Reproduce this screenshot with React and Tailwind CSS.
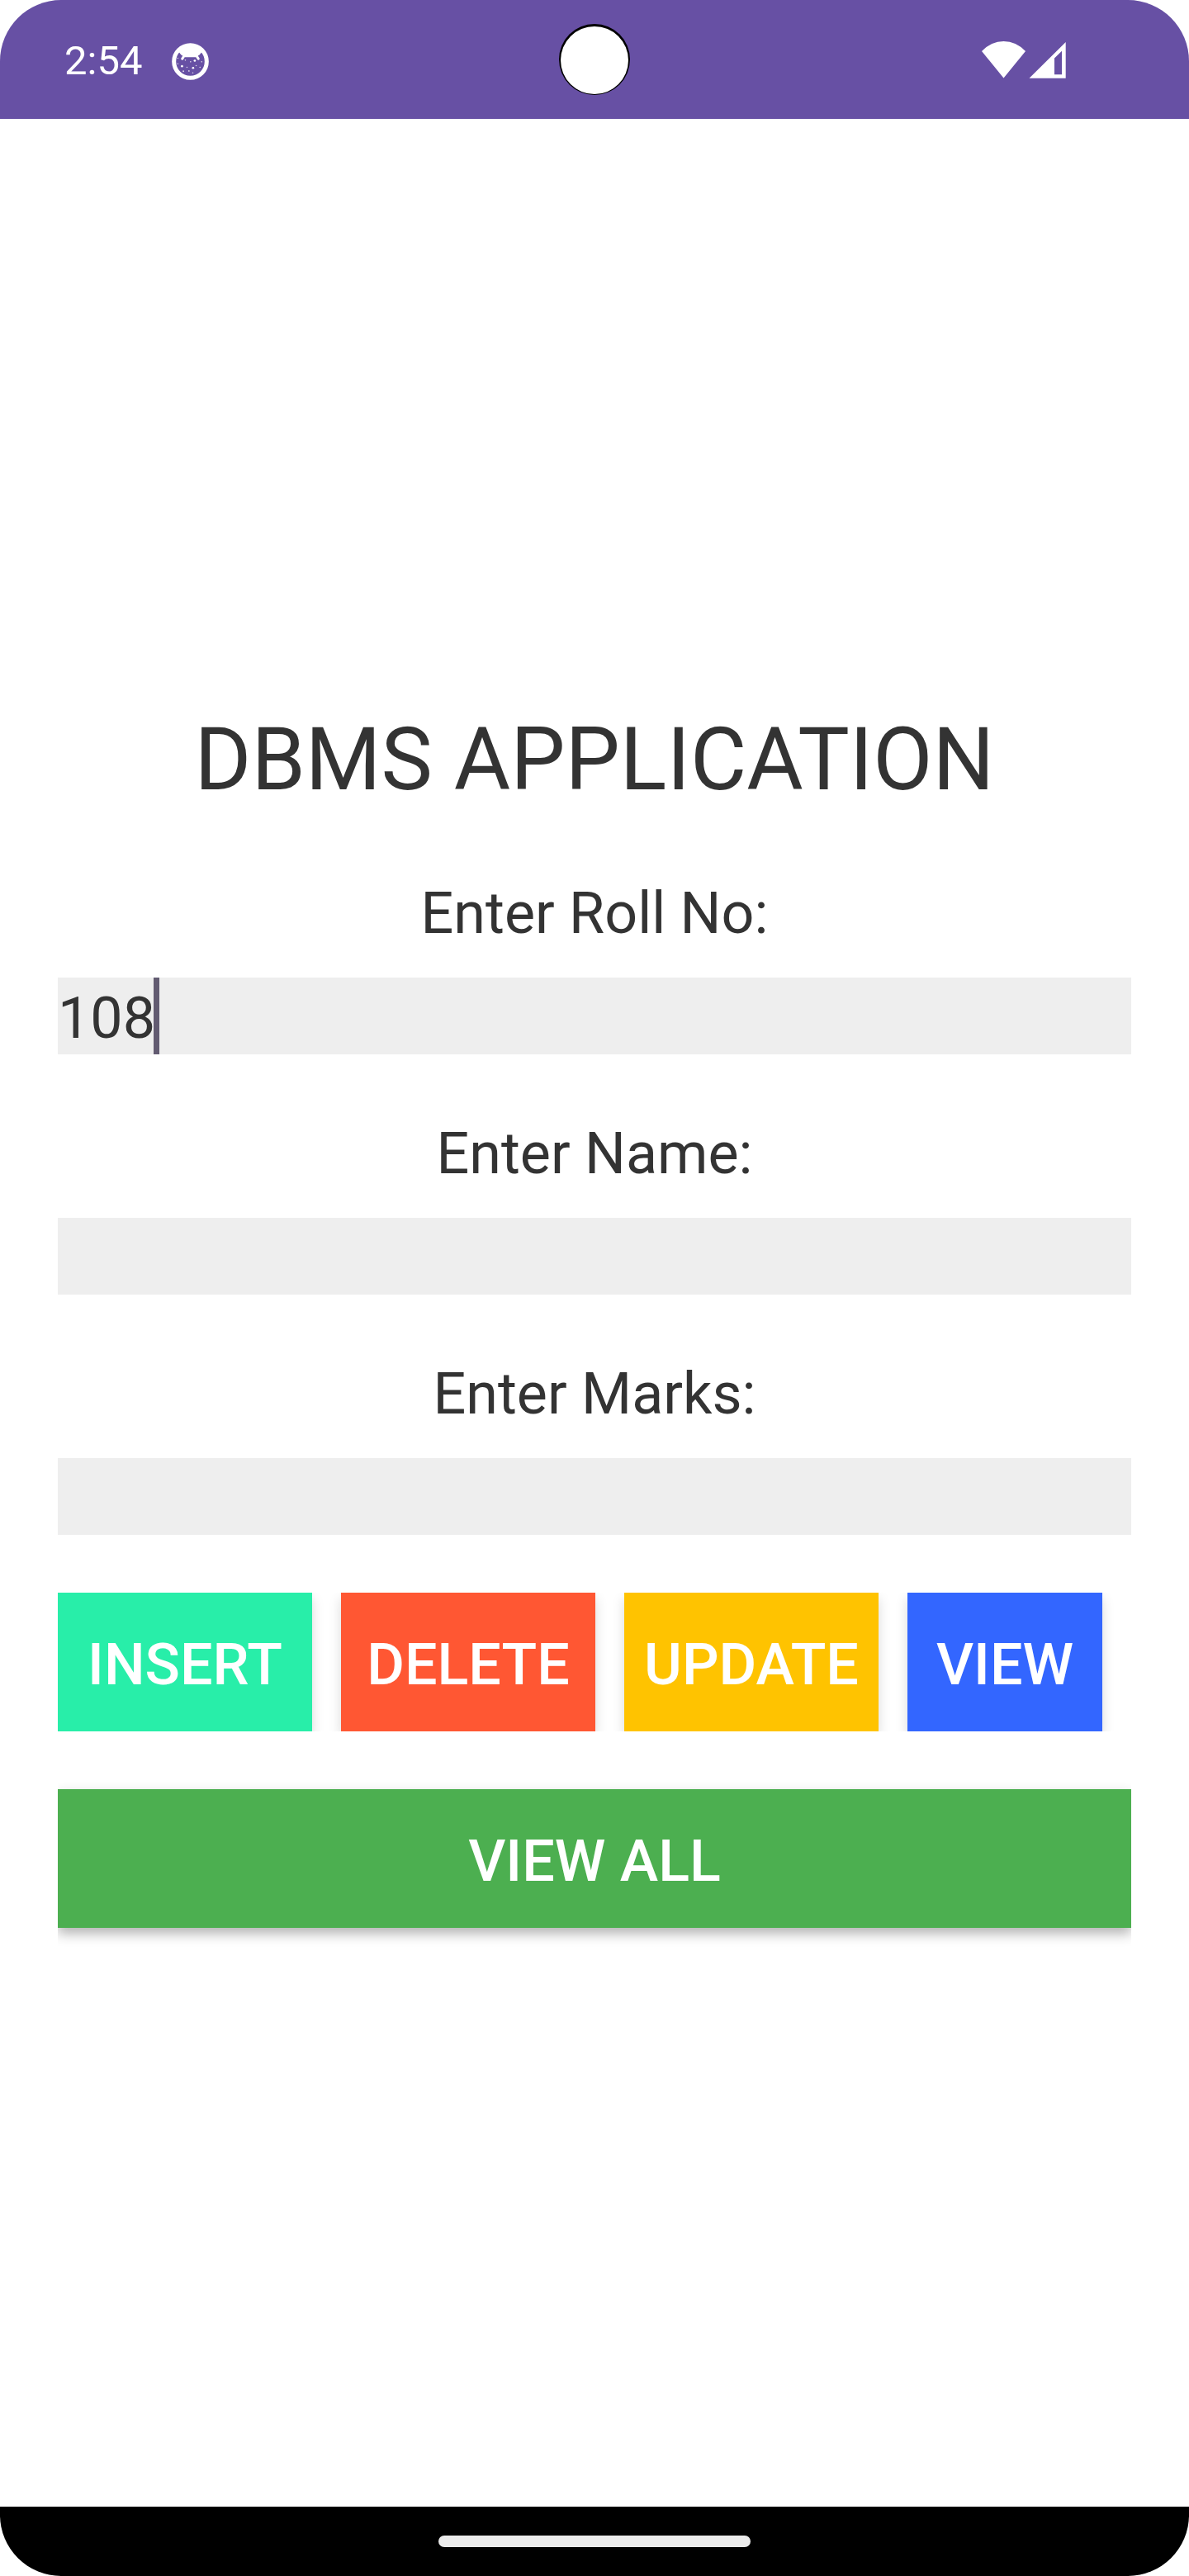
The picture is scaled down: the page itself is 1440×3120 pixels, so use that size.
import React, { useState } from "react";

function DebugIcon() {
  return (
    <svg viewBox="0 0 134 134" className="size-[45px]" fill="#fff" aria-hidden="true">
      <circle cx="67" cy="67" r="59" fill="none" stroke="#fff" strokeWidth="15" />
      <path d="M20 33 C34 8 100 8 114 33 L107 34 L100 43 C94 46 92 50 86 51 H48 C42 50 40 46 34 43 L27 34 Z" />
      <path d="M45 46 L38 57 M89 46 L96 57" stroke="#fff" strokeWidth="9" strokeLinecap="round" />
      <circle cx="83" cy="64" r="4" />
      <circle cx="37" cy="84" r="4" />
      <circle cx="77" cy="90" r="4" />
      <g opacity="0.75">
        <circle cx="22" cy="55" r="2.4" />
        <circle cx="49" cy="62" r="2.4" />
        <circle cx="68" cy="68" r="2.4" />
        <circle cx="108" cy="68" r="2.4" />
        <circle cx="22" cy="75" r="2.4" />
        <circle cx="55" cy="88" r="2.4" />
        <circle cx="88" cy="82" r="2.4" />
        <circle cx="102" cy="88" r="2.4" />
        <circle cx="42" cy="102" r="2.8" />
        <circle cx="62" cy="101" r="2.8" />
        <circle cx="76" cy="108" r="2.4" />
      </g>
    </svg>
  );
}

function WifiIcon() {
  return (
    <svg viewBox="0 0 53 45" className="h-[45px] w-[53px]" fill="#fff" aria-hidden="true">
      <path d="M26.500 44.500 L0 12 Q11.500 0 26.500 0 T53 12 Z" />
    </svg>
  );
}

function SignalIcon() {
  return (
    <svg viewBox="0 0 45 45" className="size-[45px]" fill="#fff" fillRule="evenodd" aria-hidden="true">
      <path d="M0.500 44.700 L44.700 1 V44.700 Z M31 20.500 V40.300 H40 V11.700 Z" />
    </svg>
  );
}

function StatusBar() {
  return (
    <header className="relative flex h-36 items-center justify-between bg-[#6750a4] pr-[149px] pl-[78px]">
      <div className="flex items-center gap-9 pt-1">
        <time className="text-[49px] leading-[58px] text-white">2:54</time>
        <DebugIcon />
      </div>
      <div className="absolute inset-0 m-auto size-[86px] rounded-full bg-black px-[2px] pt-[3px]">
        <div className="size-[82px] rounded-full bg-white" />
      </div>
      <div className="flex items-center gap-1">
        <WifiIcon />
        <SignalIcon />
      </div>
    </header>
  );
}

function Field({ id, label, value, onChange, active }) {
  return (
    <div className="flex flex-col gap-[35px]">
      <label htmlFor={id} className="pt-[7px] text-center text-[70px] leading-[86px]">
        {label}
      </label>
      <div className="relative">
        <input
          id={id}
          type="text"
          value={value}
          onChange={(e) => onChange(e.target.value)}
          className="block h-[93px] w-full bg-[#eeeeee] pt-[6px] text-[70px] leading-[86px] caret-transparent outline-none"
        />
        {active && (
          <span className="pointer-events-none absolute inset-y-0 left-[116px] w-[7px] bg-[#625b71]" />
        )}
      </div>
    </div>
  );
}

const buttonBase =
  "h-[168px] pt-[6px] text-center text-[70px] leading-[82px] font-medium text-white";
const sideShadow = "shadow-[0_7px_14px_rgba(0,0,0,0.15)]";

const actions = [
  { name: "INSERT", color: "bg-[#28eea9]" },
  { name: "DELETE", color: "bg-[#ff5733]" },
  { name: "UPDATE", color: "bg-[#ffc300]" },
  { name: "VIEW", color: "bg-[#3366ff]" },
];

export default function App() {
  const [rollNo, setRollNo] = useState("108");
  const [name, setName] = useState("");
  const [marks, setMarks] = useState("");

  return (
    <div className="flex min-h-screen flex-col overflow-hidden rounded-[74px] bg-white font-['Roboto',sans-serif] text-[#333333]">
      <StatusBar />
      <main className="flex flex-1 flex-col justify-center gap-[70px] px-[70px]">
        <h1 className="pt-[10px] text-center text-[105px] leading-[130px]">DBMS APPLICATION</h1>
        <Field id="roll" label="Enter Roll No:" value={rollNo} onChange={setRollNo} active />
        <Field id="name" label="Enter Name:" value={name} onChange={setName} />
        <Field id="marks" label="Enter Marks:" value={marks} onChange={setMarks} />
        <div className="grid grid-cols-[308fr_308fr_308fr_236fr] gap-[35px] overflow-hidden pr-[35px]">
          {actions.map((a) => (
            <button key={a.name} type="button" className={`${buttonBase} ${sideShadow} ${a.color}`}>
              {a.name}
            </button>
          ))}
        </div>
        <div className="overflow-x-clip">
          <button
            type="button"
            className={`${buttonBase} block w-full bg-[#4caf50] shadow-[0_7px_14px_rgba(0,0,0,0.3)]`}
          >
            VIEW ALL
          </button>
        </div>
      </main>
      <footer className="flex h-[84px] items-center justify-center bg-black">
        <div className="h-[14px] w-[378px] rounded-full bg-[#ebebeb]" />
      </footer>
    </div>
  );
}
